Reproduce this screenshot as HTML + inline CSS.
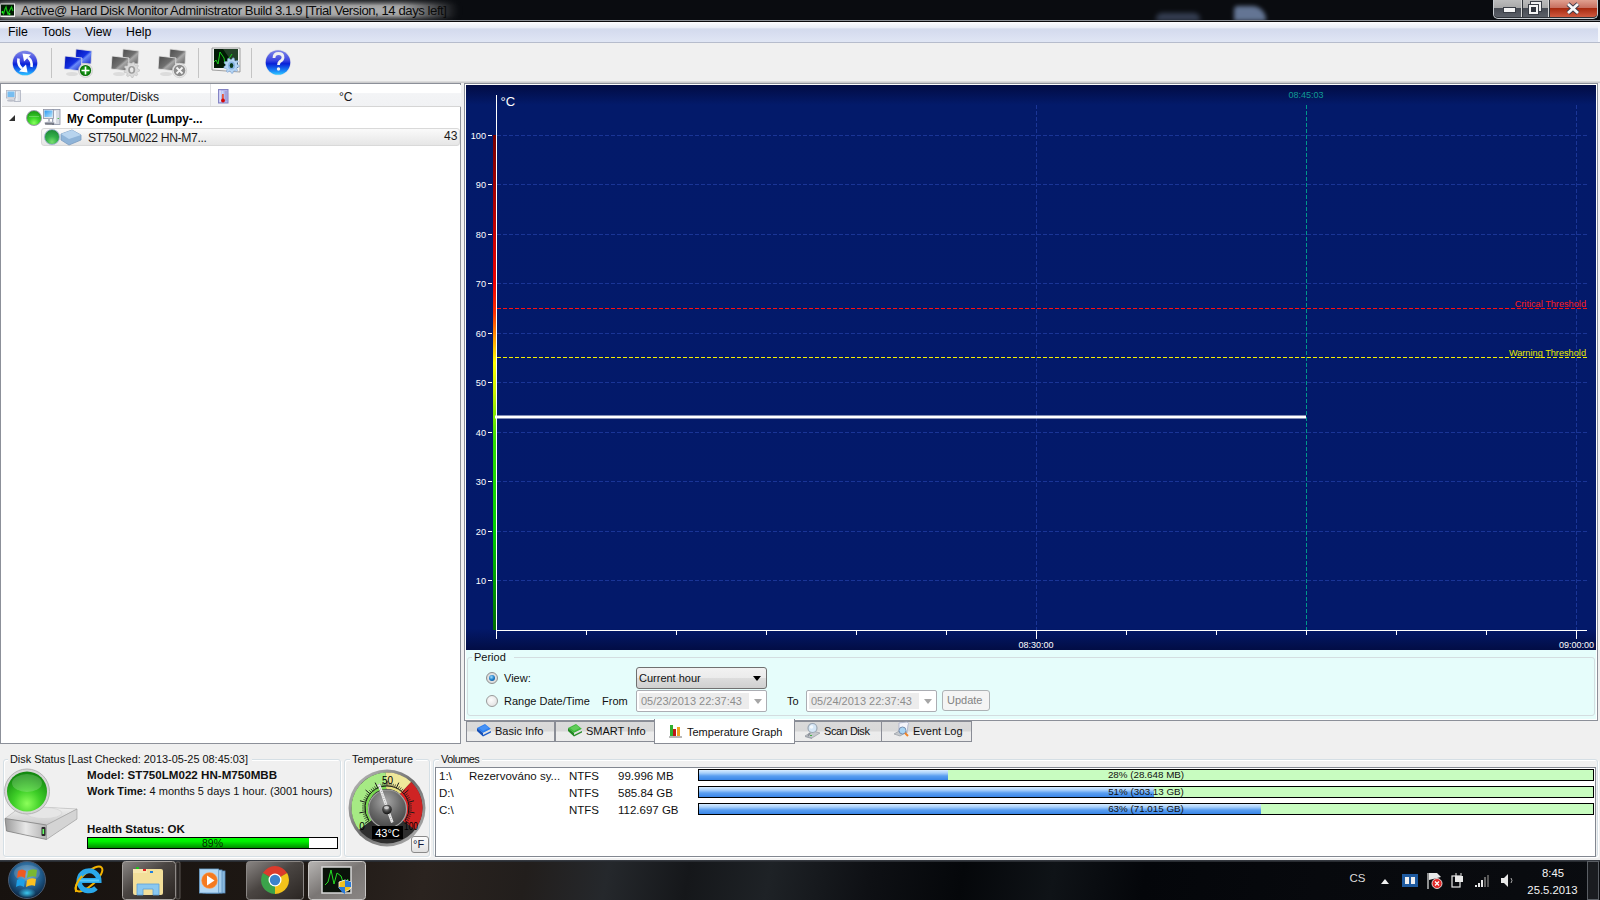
<!DOCTYPE html>
<html><head><meta charset="utf-8">
<style>
*{margin:0;padding:0;box-sizing:border-box}
html,body{width:1600px;height:900px;overflow:hidden;background:#f0f0f0;font-family:"Liberation Sans",sans-serif;font-size:11px;color:#000}
.a{position:absolute}
.t{position:absolute;white-space:nowrap;line-height:1}
#title{left:0;top:0;width:1600px;height:22px;background:#0a0c10}
#menu{left:0;top:22px;width:1600px;height:21px;background:linear-gradient(#fdfdff 0,#f2f4fa 15%,#e8ecf6 30%,#d3daed 34%,#d8def0 60%,#e0e6f4 100%);border-bottom:1px solid #b6bccc;box-shadow:inset -2px 0 0 #f4f6fb}
#tool{left:0;top:43px;width:1600px;height:40px;background:#f0f0f0}
#left{left:0;top:83px;width:461px;height:661px;background:#fff;border:1px solid #8c9099}
#graph{left:0;top:0;width:0;height:0}
#period{left:466px;top:650px;width:1130px;height:69px;background:#e6fdfb}
#bottom{left:0;top:744px;width:1600px;height:113px;background:#f0f0f0}
#taskbar{left:0;top:860px;width:1600px;height:40px;background:#101216}
</style></head><body>
<div class="a" id="title">
<div class="a" style="left:-10px;top:1px;width:468px;height:19px;border-radius:10px;background:linear-gradient(90deg,rgba(185,185,185,.0) 0,rgba(185,185,185,.95) 3%,rgba(180,180,180,.95) 88%,rgba(180,180,180,0) 100%);filter:blur(3.5px)"></div>
<div class="a" style="left:0;top:0;width:1600px;height:22px;background:linear-gradient(rgba(10,12,16,.55) 0,rgba(10,12,16,0) 25%,rgba(10,12,16,0) 70%,rgba(10,12,16,.6) 100%)"></div>
<div class="a" style="left:1156px;top:13px;width:44px;height:8px;background:#5a6a8c;filter:blur(2.5px);opacity:.55;border-radius:6px 6px 0 0"></div>
<div class="a" style="left:1234px;top:6px;width:32px;height:15px;background:#8aa2cc;filter:blur(2px);opacity:.7;border-radius:4px 14px 0 0"></div>
<svg class="a" style="left:0;top:3px" width="16" height="15"><rect x="0.5" y="0.5" width="14.5" height="13.5" fill="#f0f0f0"/><rect x="1" y="1.5" width="13" height="11" fill="#031a05"/><polyline points="2,9 3.5,11 5,6 6,4 7,8 8,11 10,7 11.5,4 13,8" fill="none" stroke="#16c016" stroke-width="1.2"/><circle cx="2.5" cy="9" r="1" fill="#2f2"/><circle cx="9.5" cy="11" r="1" fill="#2f2"/></svg>
<div class="t" style="left:21px;top:4px;font-size:13.1px;color:#0a0a0a;letter-spacing:-0.43px">Active@ Hard Disk Monitor Administrator Build 3.1.9 [Trial Version, 14 days left]</div>
<div class="a" style="left:1493px;top:0;width:105px;height:19px;border:1px solid #c8ccd0;border-top:none;border-radius:0 0 5px 5px;background:#30343a"></div>
<div class="a" style="left:1494px;top:0;width:28px;height:17px;border-radius:0 0 0 4px;border-right:1px solid #d8d8d8;background:linear-gradient(#bcbcbc 0,#a8a8a8 45%,#484c54 50%,#5c6068 100%)"></div>
<div class="a" style="left:1523px;top:0;width:26px;height:17px;border-right:1px solid #d8d8d8;background:linear-gradient(#bcbcbc 0,#a8a8a8 45%,#484c54 50%,#5c6068 100%)"></div>
<div class="a" style="left:1550px;top:0;width:47px;height:17px;border-radius:0 0 4px 0;background:linear-gradient(#e0a090 0,#c87060 45%,#a82a10 50%,#d05a40 100%)"></div>
<div class="a" style="left:1504px;top:8px;width:11px;height:4px;background:#f4f4f4;box-shadow:0 0 0 1px #3a3e46"></div>
<div class="a" style="left:1531px;top:2px;width:10px;height:9px;border:2px solid #f0f0f0;box-shadow:0 0 0 1px #3a3e46"></div>
<div class="a" style="left:1529px;top:5px;width:9px;height:9px;border:2px solid #f4f4f4;background:#30343c;box-shadow:0 0 0 1px #3a3e46"></div>
<svg class="a" style="left:1566px;top:2px" width="14" height="13"><path d="M2,2 L12,11 M12,2 L2,11" stroke="#3a3a4a" stroke-width="4.4"/><path d="M2,2 L12,11 M12,2 L2,11" stroke="#f8f8f8" stroke-width="2.8"/></svg>
<div class="a" style="left:0;top:20px;width:1600px;height:1px;background:#8a8e94"></div>
<div class="a" style="left:0;top:21px;width:1600px;height:1px;background:#08080a"></div>
</div>
<div class="a" id="menu">
<div class="t" style="left:8px;top:4px;font-size:12.3px">File</div>
<div class="t" style="left:42px;top:4px;font-size:12.3px">Tools</div>
<div class="t" style="left:85px;top:4px;font-size:12.3px">View</div>
<div class="t" style="left:126px;top:4px;font-size:12.3px">Help</div>
</div>
<div class="a" id="tool">
<svg class="a" style="left:0;top:0" width="320" height="40" viewBox="0 43 320 40">
<defs>
<linearGradient id="bl" x1="0" y1="0" x2="0" y2="1"><stop offset="0" stop-color="#8088e8"/><stop offset=".42" stop-color="#3a44e0"/><stop offset=".55" stop-color="#0820d8"/><stop offset=".85" stop-color="#1a8cf8"/><stop offset="1" stop-color="#30c8ff"/></linearGradient>
<linearGradient id="scr" x1="0" y1="0" x2="1" y2="1"><stop offset="0" stop-color="#0010b0"/><stop offset=".5" stop-color="#1430e0"/><stop offset=".6" stop-color="#6a8af8"/><stop offset="1" stop-color="#1020c0"/></linearGradient>
<linearGradient id="scrg" x1="0" y1="0" x2="1" y2="1"><stop offset="0" stop-color="#4a4a4a"/><stop offset=".5" stop-color="#707070"/><stop offset=".6" stop-color="#a8a8a8"/><stop offset="1" stop-color="#5a5a5a"/></linearGradient>
<radialGradient id="grn" cx=".5" cy=".5" r=".5"><stop offset="0" stop-color="#30c030"/><stop offset="1" stop-color="#006a00"/></radialGradient>
</defs>
<circle cx="25" cy="63" r="13" fill="#d8d8e0" opacity=".6"/>
<circle cx="25" cy="63" r="12.3" fill="url(#bl)"/>
<path d="M31.5,67 Q32.5,61 28,57.5" fill="none" stroke="#fff" stroke-width="2.6"/>
<polygon points="22.5,53.5 31,54.5 24,61.5" fill="#fff"/>
<path d="M18.5,58.5 Q17.5,65 22,68.5" fill="none" stroke="#fff" stroke-width="2.6"/>
<polygon points="27.5,72.5 19,71.5 26,64.5" fill="#fff"/>
<line x1="51.5" y1="48" x2="51.5" y2="78" stroke="#c4c4c4" stroke-width="1"/>
<line x1="198.5" y1="48" x2="198.5" y2="78" stroke="#c4c4c4" stroke-width="1"/>
<line x1="251.5" y1="48" x2="251.5" y2="78" stroke="#c4c4c4" stroke-width="1"/>
<!-- add computer -->
<polygon points="76,49 92,51 91,64 75,63" fill="url(#scr)" stroke="#e0e0e0" stroke-width="0.8"/>
<polygon points="65,56 82,58 81,71 64,69" fill="url(#scr)" stroke="#e8e8e8" stroke-width="0.8"/>
<ellipse cx="72" cy="74" rx="6" ry="2" fill="#dcdcdc"/>
<circle cx="85.5" cy="70.5" r="7" fill="#e8e8e8" stroke="#bcbcbc" stroke-width="0.6"/>
<circle cx="85.5" cy="70.5" r="5.6" fill="url(#grn)"/>
<path d="M85.5,66.5 V74.5 M81.5,70.5 H89.5" stroke="#fff" stroke-width="1.6"/>
<!-- gray computer gear -->
<polygon points="123,49 139,51 138,64 122,63" fill="url(#scrg)" stroke="#e0e0e0" stroke-width="0.8"/>
<polygon points="112,56 129,58 128,71 111,69" fill="url(#scrg)" stroke="#e8e8e8" stroke-width="0.8"/>
<ellipse cx="119" cy="74" rx="6" ry="2" fill="#dcdcdc"/>
<polygon points="139.50,69.80 139.38,71.15 137.34,71.85 136.90,72.80 137.68,74.81 136.71,75.78 134.70,75.00 133.75,75.44 133.05,77.48 131.70,77.60 130.66,75.71 129.65,75.44 127.80,76.55 126.69,75.78 127.10,73.66 126.50,72.80 124.37,72.47 124.02,71.15 125.70,69.80 125.79,68.76 124.37,67.13 124.95,65.90 127.10,65.94 127.84,65.20 127.80,63.05 129.03,62.47 130.66,63.89 131.70,63.80 133.05,62.12 134.37,62.47 134.70,64.60 135.56,65.20 137.68,64.79 138.45,65.90 137.34,67.75 137.61,68.76" fill="#dadada" stroke="#b8b8b8" stroke-width="0.6"/><ellipse cx="131.7" cy="69.8" rx="3.51" ry="3.90" fill="#9c9c9c"/><ellipse cx="131.7" cy="69.8" rx="1.82" ry="2.60" fill="#e8e8e8"/>
<!-- gray computer x -->
<polygon points="170,49 186,51 185,64 169,63" fill="url(#scrg)" stroke="#e0e0e0" stroke-width="0.8"/>
<polygon points="159,56 176,58 175,71 158,69" fill="url(#scrg)" stroke="#e8e8e8" stroke-width="0.8"/>
<ellipse cx="166" cy="74" rx="6" ry="2" fill="#dcdcdc"/>
<circle cx="179.5" cy="70.5" r="7.2" fill="#e6e6e6" stroke="#c8c8c8" stroke-width="0.6"/>
<circle cx="179.5" cy="70.5" r="5.8" fill="#8c8c8c"/>
<path d="M176.5,67.5 L182.5,73.5 M182.5,67.5 L176.5,73.5" stroke="#f4f4f4" stroke-width="1.8"/>
<!-- monitor gear -->
<polygon points="212,48 240,48 240,72 212,70" fill="#f0f0f0" stroke="#8a8a8a" stroke-width="0.8"/>
<rect x="214" y="49" width="24" height="19" fill="#021a06"/>
<polygon points="223,49 238,49 238,60 232,62" fill="#2a4a30" opacity=".8"/>
<polyline points="214,62 216,60 218,64 220,52 222,55 224,58 225,64 228,60 232,54" fill="none" stroke="#1ad01a" stroke-width="1"/>
<polygon points="239.30,65.50 239.18,66.85 237.14,67.55 236.70,68.50 237.48,70.51 236.51,71.48 234.50,70.70 233.55,71.14 232.85,73.18 231.50,73.30 230.46,71.41 229.45,71.14 227.60,72.25 226.49,71.48 226.90,69.36 226.30,68.50 224.17,68.17 223.82,66.85 225.50,65.50 225.59,64.46 224.17,62.83 224.75,61.60 226.90,61.64 227.64,60.90 227.60,58.75 228.83,58.17 230.46,59.59 231.50,59.50 232.85,57.82 234.17,58.17 234.50,60.30 235.36,60.90 237.48,60.49 238.25,61.60 237.14,63.45 237.41,64.46" fill="#b4d4f4" stroke="#7aa0d0" stroke-width="0.6"/><ellipse cx="231.5" cy="65.5" rx="3.51" ry="3.90" fill="#88b4e4"/><ellipse cx="231.5" cy="65.5" rx="1.82" ry="2.60" fill="#0a3a20"/>
<!-- help -->
<circle cx="278" cy="62.5" r="13" fill="#d8d8e0" opacity=".6"/>
<circle cx="278" cy="62.5" r="12.3" fill="url(#bl)"/>
<path d="M274,58 Q274,53.5 278.5,53.5 Q283,53.5 283,57.5 Q283,60 280,61.5 Q278.5,62.5 278.5,65" fill="none" stroke="#f0f0f0" stroke-width="2.8"/>
<circle cx="278.5" cy="69" r="1.7" fill="#f0f0f0"/>
</svg>
</div>
<div class="a" style="left:0;top:81px;width:1600px;height:2px;background:linear-gradient(#e4e4e4,#c4c4c6)"></div>
<div class="a" id="left">
<div class="a" style="left:1px;top:1px;width:459px;height:22px;background:linear-gradient(#fff 0,#fff 36%,#f3f4f6 41%,#f1f2f4 100%);border-bottom:1px solid #d5d5d5"></div>
<div class="a" style="left:209px;top:0px;width:1px;height:22px;background:#dfe0e3"></div>
<svg class="a" style="left:4px;top:5px" width="18" height="14" viewBox="4 89 18 14" opacity=".8">
<rect x="13.5" y="90.5" width="6" height="11" fill="#d8dce4" stroke="#9ca2b2" stroke-width="0.8"/><rect x="15" y="92" width="1.5" height="9" fill="#f0f2f6"/>
<rect x="5.5" y="90.5" width="9" height="7.5" fill="#e4e6ec" stroke="#9ca2b2" stroke-width="0.8"/><rect x="6.5" y="91.5" width="7" height="5.5" fill="#58b0f0"/>
<ellipse cx="10" cy="100.5" rx="4" ry="1.2" fill="#b0b4c0"/></svg>
<div class="t" style="left:72px;top:7px;font-size:12.1px;color:#1a1a1a">Computer/Disks</div>
<svg class="a" style="left:216px;top:5px" width="12" height="15"><rect x="1.5" y="0.5" width="9.5" height="13.5" fill="#b4b4ea" stroke="#8484c4"/><rect x="2.5" y="1.5" width="1.2" height="11.5" fill="#e8e8fc"/><rect x="4.5" y="2" width="2" height="4" fill="#c8d8f8"/><rect x="8" y="2" width="2" height="10" fill="#a4a4dc"/><rect x="5" y="5" width="1.8" height="6" fill="#e8583a"/><circle cx="6" cy="11.5" r="1.9" fill="#d40808"/></svg>
<div class="t" style="left:338px;top:7px;font-size:12.1px;color:#1a1a1a">°C</div>
<svg class="a" style="left:7px;top:31px" width="8" height="8" viewBox="0 1 8 8"><polygon points="7,1 7,7 1,7" fill="#303030"/></svg>
<div class="a" style="left:25px;top:26px;width:16px;height:16px;border-radius:50%;background:radial-gradient(circle at 50% 85%,#8aff60 0,#3fd82c 35%,#1e9e18 80%);border:1px solid #9a9aa8"></div>
<div class="a" style="left:28px;top:32px;width:10px;height:1px;background:rgba(255,255,255,.25)"></div>
<svg class="a" style="left:41px;top:24px" width="21" height="20" viewBox="42 108 21 20"><defs><linearGradient id="tscr" x1="0" y1="0" x2="1" y2="1"><stop offset="0" stop-color="#2a98f0"/><stop offset="1" stop-color="#b8e4fc"/></linearGradient></defs>
<rect x="52.5" y="109.5" width="7.5" height="15" fill="#d8dce4" stroke="#8c92a6" stroke-width="0.8"/><rect x="54" y="111" width="2" height="12" fill="#f4f6fa"/><rect x="57.5" y="118" width="1.5" height="1" fill="#50c050"/>
<rect x="43.5" y="109.5" width="10" height="9" fill="#e4e6ec" stroke="#8c92a6" stroke-width="0.8"/><rect x="44.5" y="110.5" width="8" height="6.5" fill="url(#tscr)"/>
<rect x="48" y="118.5" width="2" height="3" fill="#b8bcc8"/><ellipse cx="49.5" cy="123" rx="5" ry="1.5" fill="#a8acb8"/><path d="M45,124 L54,124" stroke="#30343c" stroke-width="0.8"/></svg>
<div class="t" style="left:66px;top:30px;font-size:11.85px;font-weight:bold;color:#000">My Computer (Lumpy-...</div>
<div class="a" style="left:40px;top:44px;width:419px;height:18px;border:1px solid #d9d9d9;border-radius:3px;background:linear-gradient(#fafafa 0,#f0f0f0 50%,#e6e6e6 100%)"></div>
<div class="a" style="left:43px;top:45px;width:16px;height:16px;border-radius:50%;background:radial-gradient(circle at 50% 85%,#7ae070 0,#34b04a 40%,#1e8a38 85%);border:1px solid #9ab0c8"></div>
<svg class="a" style="left:58px;top:45px" width="24" height="17"><polygon points="2,5 13,1 22,6 22,11 10,16 2,11" fill="#8fb4d8" stroke="#7a9cc0" stroke-width="0.8"/><polygon points="2,5 13,1 22,6 10,10" fill="#b8d4ee"/></svg>
<div class="t" style="left:87px;top:48px;font-size:12.2px;letter-spacing:-0.35px;color:#1a1a1a">ST750LM022 HN-M7...</div>
<div class="t" style="left:443px;top:46px;font-size:12.1px;color:#1a1a1a">43</div>
</div>
<div class="a" style="left:464px;top:83px;width:1134px;height:638px;border:1px solid #8c9099;background:#fff"></div>
<div class="a" id="graph"><svg class="a" style="left:466px;top:85px" width="1130" height="565" viewBox="466 85 1130 565">
<defs>
<linearGradient id="gbg" x1="0" y1="0" x2="0" y2="1"><stop offset="0" stop-color="#020c44"/><stop offset="0.035" stop-color="#031a6a"/><stop offset="0.962" stop-color="#03196a"/><stop offset="1" stop-color="#020d45"/></linearGradient>
<linearGradient id="cbar" x1="0" y1="135" x2="0" y2="630" gradientUnits="userSpaceOnUse">
<stop offset="0" stop-color="#780000"/><stop offset="0.3" stop-color="#f00000"/><stop offset="0.36" stop-color="#ff3000"/><stop offset="0.41" stop-color="#ff9a00"/><stop offset="0.46" stop-color="#ffff00"/><stop offset="0.52" stop-color="#c8f000"/><stop offset="0.62" stop-color="#30e000"/><stop offset="0.8" stop-color="#00d000"/><stop offset="1" stop-color="#006e00"/></linearGradient>
</defs>
<rect x="466" y="85" width="1130" height="565" fill="url(#gbg)"/>
<line x1="497" y1="135.5" x2="1587" y2="135.5" stroke="#1a3596" stroke-width="1" stroke-dasharray="4 2"/>
<line x1="488" y1="135.5" x2="492" y2="135.5" stroke="#fff" stroke-width="1"/>
<text x="486" y="139" fill="#fff" font-size="9.2" text-anchor="end" font-family="Liberation Sans">100</text>
<line x1="497" y1="184.5" x2="1587" y2="184.5" stroke="#1a3596" stroke-width="1" stroke-dasharray="4 2"/>
<line x1="488" y1="184.5" x2="492" y2="184.5" stroke="#fff" stroke-width="1"/>
<text x="486" y="188" fill="#fff" font-size="9.2" text-anchor="end" font-family="Liberation Sans">90</text>
<line x1="497" y1="234.5" x2="1587" y2="234.5" stroke="#1a3596" stroke-width="1" stroke-dasharray="4 2"/>
<line x1="488" y1="234.5" x2="492" y2="234.5" stroke="#fff" stroke-width="1"/>
<text x="486" y="238" fill="#fff" font-size="9.2" text-anchor="end" font-family="Liberation Sans">80</text>
<line x1="497" y1="283.5" x2="1587" y2="283.5" stroke="#1a3596" stroke-width="1" stroke-dasharray="4 2"/>
<line x1="488" y1="283.5" x2="492" y2="283.5" stroke="#fff" stroke-width="1"/>
<text x="486" y="287" fill="#fff" font-size="9.2" text-anchor="end" font-family="Liberation Sans">70</text>
<line x1="497" y1="333.5" x2="1587" y2="333.5" stroke="#1a3596" stroke-width="1" stroke-dasharray="4 2"/>
<line x1="488" y1="333.5" x2="492" y2="333.5" stroke="#fff" stroke-width="1"/>
<text x="486" y="337" fill="#fff" font-size="9.2" text-anchor="end" font-family="Liberation Sans">60</text>
<line x1="497" y1="382.5" x2="1587" y2="382.5" stroke="#1a3596" stroke-width="1" stroke-dasharray="4 2"/>
<line x1="488" y1="382.5" x2="492" y2="382.5" stroke="#fff" stroke-width="1"/>
<text x="486" y="386" fill="#fff" font-size="9.2" text-anchor="end" font-family="Liberation Sans">50</text>
<line x1="497" y1="432.5" x2="1587" y2="432.5" stroke="#1a3596" stroke-width="1" stroke-dasharray="4 2"/>
<line x1="488" y1="432.5" x2="492" y2="432.5" stroke="#fff" stroke-width="1"/>
<text x="486" y="436" fill="#fff" font-size="9.2" text-anchor="end" font-family="Liberation Sans">40</text>
<line x1="497" y1="481.5" x2="1587" y2="481.5" stroke="#1a3596" stroke-width="1" stroke-dasharray="4 2"/>
<line x1="488" y1="481.5" x2="492" y2="481.5" stroke="#fff" stroke-width="1"/>
<text x="486" y="485" fill="#fff" font-size="9.2" text-anchor="end" font-family="Liberation Sans">30</text>
<line x1="497" y1="531.5" x2="1587" y2="531.5" stroke="#1a3596" stroke-width="1" stroke-dasharray="4 2"/>
<line x1="488" y1="531.5" x2="492" y2="531.5" stroke="#fff" stroke-width="1"/>
<text x="486" y="535" fill="#fff" font-size="9.2" text-anchor="end" font-family="Liberation Sans">20</text>
<line x1="497" y1="580.5" x2="1587" y2="580.5" stroke="#1a3596" stroke-width="1" stroke-dasharray="4 2"/>
<line x1="488" y1="580.5" x2="492" y2="580.5" stroke="#fff" stroke-width="1"/>
<text x="486" y="584" fill="#fff" font-size="9.2" text-anchor="end" font-family="Liberation Sans">10</text>
<line x1="1036.5" y1="105" x2="1036.5" y2="630" stroke="#1a3596" stroke-width="1" stroke-dasharray="4 2"/>
<line x1="1576.5" y1="105" x2="1576.5" y2="630" stroke="#1a3596" stroke-width="1" stroke-dasharray="4 2"/>
<line x1="1306.5" y1="105" x2="1306.5" y2="630" stroke="#00968c" stroke-width="1" stroke-dasharray="4 2"/>
<line x1="497" y1="308.5" x2="1587" y2="308.5" stroke="#ff1010" stroke-width="1" stroke-dasharray="4 2"/>
<line x1="497" y1="357.5" x2="1587" y2="357.5" stroke="#f4f000" stroke-width="1" stroke-dasharray="4 2"/>
<text x="1586" y="307" fill="#ff1a1a" font-size="9.2" text-anchor="end" font-family="Liberation Sans">Critical Threshold</text>
<text x="1586" y="356" fill="#e8e800" font-size="9.2" text-anchor="end" font-family="Liberation Sans">Warning Threshold</text>
<rect x="493" y="135" width="3" height="495" fill="url(#cbar)"/>
<line x1="496.5" y1="95" x2="496.5" y2="638" stroke="#fff" stroke-width="1"/>
<line x1="496" y1="630.5" x2="1587" y2="630.5" stroke="#fff" stroke-width="1"/>
<line x1="496.5" y1="631" x2="496.5" y2="639" stroke="#fff" stroke-width="1"/>
<line x1="586.5" y1="631" x2="586.5" y2="635" stroke="#fff" stroke-width="1"/>
<line x1="676.5" y1="631" x2="676.5" y2="635" stroke="#fff" stroke-width="1"/>
<line x1="766.5" y1="631" x2="766.5" y2="635" stroke="#fff" stroke-width="1"/>
<line x1="856.5" y1="631" x2="856.5" y2="635" stroke="#fff" stroke-width="1"/>
<line x1="946.5" y1="631" x2="946.5" y2="635" stroke="#fff" stroke-width="1"/>
<line x1="1036.5" y1="631" x2="1036.5" y2="639" stroke="#fff" stroke-width="1"/>
<line x1="1126.5" y1="631" x2="1126.5" y2="635" stroke="#fff" stroke-width="1"/>
<line x1="1216.5" y1="631" x2="1216.5" y2="635" stroke="#fff" stroke-width="1"/>
<line x1="1306.5" y1="631" x2="1306.5" y2="635" stroke="#fff" stroke-width="1"/>
<line x1="1396.5" y1="631" x2="1396.5" y2="635" stroke="#fff" stroke-width="1"/>
<line x1="1486.5" y1="631" x2="1486.5" y2="635" stroke="#fff" stroke-width="1"/>
<line x1="1576.5" y1="631" x2="1576.5" y2="639" stroke="#fff" stroke-width="1"/>
<text x="500.5" y="105.5" fill="#fff" font-size="13" font-family="Liberation Sans">°C</text>
<text x="1306" y="98" fill="#119a94" font-size="9" text-anchor="middle" font-family="Liberation Sans">08:45:03</text>
<text x="1036" y="648" fill="#fff" font-size="9" text-anchor="middle" font-family="Liberation Sans">08:30:00</text>
<text x="1594" y="648" fill="#fff" font-size="9" text-anchor="end" font-family="Liberation Sans">09:00:00</text>
<rect x="495" y="415.5" width="811" height="3" fill="#fff"/>
</svg></div>
<div class="a" id="period">
<div class="a" style="left:1px;top:7px;width:1128px;height:59px;border:1px solid #d4dde0;border-radius:3px"></div>
<div class="a" style="left:6px;top:2px;width:42px;height:12px;background:#e6fdfb"></div>
<div class="t" style="left:8px;top:2px;font-size:11px;color:#111">Period</div>
<div class="a" style="left:20px;top:22px;width:12px;height:12px;border-radius:50%;border:1px solid #8e8f8f;background:radial-gradient(#f4f4f4,#d0d0d0)"></div>
<div class="a" style="left:23px;top:25px;width:6px;height:6px;border-radius:50%;background:radial-gradient(circle at 40% 35%,#9fdcff 0,#1e7fc8 50%,#0a3f80 100%)"></div>
<div class="t" style="left:38px;top:23px;font-size:11px;color:#111">View:</div>
<div class="a" style="left:20px;top:45px;width:12px;height:12px;border-radius:50%;border:1px solid #9a9a9a;background:radial-gradient(circle at 40% 40%,#fdfdfd,#dcdcdc)"></div>
<div class="t" style="left:38px;top:46px;font-size:11px;color:#111">Range Date/Time</div>
<div class="t" style="left:136px;top:46px;font-size:11px;color:#111">From</div>
<div class="a" style="left:170px;top:17px;width:131px;height:22px;border:1px solid #707070;border-radius:3px;background:linear-gradient(#f2f2f2 0,#ebebeb 50%,#dddddd 51%,#cfcfcf 100%)"></div>
<div class="t" style="left:173px;top:23px;font-size:11px;color:#111">Current hour</div>
<svg class="a" style="left:287px;top:26px" width="9" height="6"><polygon points="0,0 8,0 4,5" fill="#000"/></svg>
<div class="a" style="left:170px;top:40px;width:131px;height:22px;border:1px solid #abadb3;border-radius:2px;background:#fff"></div>
<div class="a" style="left:173px;top:43px;width:110px;height:16px;background:#ececec"></div>
<div class="t" style="left:175px;top:46px;font-size:11px;color:#8d8d8d">05/23/2013 22:37:43</div>
<svg class="a" style="left:288px;top:49px" width="9" height="6"><polygon points="0,0 8,0 4,5" fill="#a6a6a6"/></svg>
<div class="t" style="left:321px;top:46px;font-size:11px;color:#111">To</div>
<div class="a" style="left:340px;top:40px;width:131px;height:22px;border:1px solid #abadb3;border-radius:2px;background:#fff"></div>
<div class="a" style="left:343px;top:43px;width:110px;height:16px;background:#ececec"></div>
<div class="t" style="left:345px;top:46px;font-size:11px;color:#8d8d8d">05/24/2013 22:37:43</div>
<svg class="a" style="left:458px;top:49px" width="9" height="6"><polygon points="0,0 8,0 4,5" fill="#a6a6a6"/></svg>
<div class="a" style="left:476px;top:40px;width:48px;height:21px;border:1px solid #adb2b5;border-radius:3px;background:#f4f4f4"></div>
<div class="t" style="left:481px;top:45px;font-size:11px;color:#838383">Update</div>
</div>
<div class="a" style="left:464px;top:720px;width:1134px;height:1px;background:#8c9099"></div>

<div class="a" style="left:466px;top:721px;width:89px;height:21px;border:1px solid #898c95;border-top:1px solid #898c95;background:linear-gradient(#dadada 0,#d8d8d8 45%,#ececec 55%,#ebebeb 100%)"></div>
<div class="a" style="left:555px;top:721px;width:100px;height:21px;border:1px solid #898c95;background:linear-gradient(#dadada 0,#d8d8d8 45%,#ececec 55%,#ebebeb 100%)"></div>
<div class="a" style="left:654px;top:719px;width:141px;height:25px;border:1px solid #898c95;border-top:none;background:#fff"></div>
<div class="a" style="left:794px;top:721px;width:88px;height:21px;border:1px solid #898c95;background:linear-gradient(#dadada 0,#d8d8d8 45%,#ececec 55%,#ebebeb 100%)"></div>
<div class="a" style="left:881px;top:721px;width:91px;height:21px;border:1px solid #898c95;background:linear-gradient(#dadada 0,#d8d8d8 45%,#ececec 55%,#ebebeb 100%)"></div>
<svg class="a" style="left:476px;top:723px" width="17" height="15"><polygon points="1,5 9,1 15,6 7,10" fill="#2a7ef0"/><polygon points="3,5 9,2 13,5 7,8" fill="#5aa0f8" opacity=".6"/><polygon points="7,10 15,6 15,9 7,13" fill="#e0e0e0"/><polygon points="7,12 15,8 15,9.5 7,13.5" fill="#1a5ac8"/><polygon points="1,5 7,10 7,13.5 1,8" fill="#1650b8"/></svg>
<div class="t" style="left:495px;top:726px;font-size:11px;color:#111">Basic Info</div>
<svg class="a" style="left:567px;top:723px" width="17" height="15"><polygon points="1,5 9,1 15,6 7,10" fill="#3cb83a"/><polygon points="3,5 9,2 13,5 7,8" fill="#7ad870" opacity=".6"/><polygon points="7,10 15,6 15,9 7,13" fill="#e0e0e0"/><polygon points="7,12 15,8 15,9.5 7,13.5" fill="#2a8a2a"/><polygon points="1,5 7,10 7,13.5 1,8" fill="#228a22"/></svg>
<div class="t" style="left:586px;top:726px;font-size:11px;color:#111">SMART Info</div>
<svg class="a" style="left:668px;top:724px" width="16" height="16"><rect x="2" y="1" width="3" height="11" fill="#30b030"/><rect x="5" y="5" width="3" height="8" fill="#c01818"/><rect x="9" y="3" width="3" height="10" fill="#f0a020"/><rect x="1" y="12" width="13" height="2" fill="#b8b8b8"/></svg>
<div class="t" style="left:687px;top:727px;font-size:11px;color:#111">Temperature Graph</div>
<svg class="a" style="left:804px;top:722px" width="18" height="18"><polygon points="1,14 9,9 16,11 8,16" fill="#c4c8cc" stroke="#8a9098" stroke-width="0.6"/><polygon points="1,14 8,16 8,17 1,15" fill="#9aa0a8"/><rect x="6" y="13" width="2" height="1" fill="#40b040"/><line x1="6" y1="11" x2="4" y2="14" stroke="#8a9098" stroke-width="1.5"/><circle cx="8.5" cy="6" r="4.5" fill="#d4e6f6" stroke="#9aa6b2" stroke-width="1.2"/><circle cx="7.5" cy="5" r="1.8" fill="#fff" opacity=".7"/></svg>
<div class="t" style="left:824px;top:726px;font-size:11px;letter-spacing:-0.45px;color:#111">Scan Disk</div>
<svg class="a" style="left:893px;top:721px" width="18" height="18"><path d="M6,2 L14,1 Q17,2 15,4 L14,12 L6,12 Z" fill="#f4f4fa" stroke="#a8aec8" stroke-width="0.8"/><polygon points="1,13 8,9 14,11 7,15" fill="#c4c8cc" stroke="#8a9098" stroke-width="0.6"/><circle cx="9.5" cy="9.5" r="3.5" fill="#a8d4f4" stroke="#7890b0" stroke-width="1"/><line x1="12" y1="12" x2="15" y2="15" stroke="#f08428" stroke-width="2"/></svg>
<div class="t" style="left:913px;top:726px;font-size:11px;color:#111">Event Log</div>

<div class="a" id="bottom">
<div class="a" style="left:3px;top:15px;width:338px;height:98px;border:1px solid #d5dfe5;border-radius:3px;box-shadow:inset 1px 1px 0 #fff,1px 1px 0 #fff"></div>
<div class="a" style="left:8px;top:9px;width:244px;height:12px;background:#f0f0f0"></div>
<div class="t" style="left:10px;top:10px;font-size:10.9px;color:#111">Disk Status [Last Checked: 2013-05-25 08:45:03]</div>
<div class="a" style="left:344px;top:15px;width:86px;height:98px;border:1px solid #d5dfe5;border-radius:3px;box-shadow:inset 1px 1px 0 #fff,1px 1px 0 #fff"></div>
<div class="a" style="left:350px;top:9px;width:66px;height:12px;background:#f0f0f0"></div>
<div class="t" style="left:352px;top:10px;font-size:10.9px;color:#111">Temperature</div>
<div class="a" style="left:433px;top:15px;width:1165px;height:98px;border:1px solid #d5dfe5;border-radius:3px;box-shadow:inset 1px 1px 0 #fff,1px 1px 0 #fff"></div>
<div class="a" style="left:439px;top:9px;width:43px;height:12px;background:#f0f0f0"></div>
<div class="t" style="left:441px;top:10px;font-size:10.9px;color:#111;letter-spacing:-0.5px">Volumes</div>
</div>
<!-- disk icon -->
<svg class="a" style="left:0;top:765px" width="85" height="85" viewBox="0 765 85 85">
<defs>
<linearGradient id="dk1" x1="0" y1="0" x2="0" y2="1"><stop offset="0" stop-color="#f4f4f4"/><stop offset="1" stop-color="#c8c8c8"/></linearGradient>
<linearGradient id="dk2" x1="0" y1="0" x2="1" y2="0"><stop offset="0" stop-color="#9a9a9a"/><stop offset=".5" stop-color="#e8e8e8"/><stop offset="1" stop-color="#b0b0b0"/></linearGradient>
<radialGradient id="gb" cx=".5" cy=".8" r=".75"><stop offset="0" stop-color="#8cff5a"/><stop offset=".45" stop-color="#3fcf28"/><stop offset="1" stop-color="#148a10"/></radialGradient>
</defs>
<path d="M5,818.5 L22,806 L77,809 L77,819 L46.5,839.5 L6.5,831 Z" fill="#bdbdbd"/>
<path d="M5,818.5 L22,806 L77,809 L46.5,825 Z" fill="url(#dk1)" stroke="#b8b8b8" stroke-width="0.6"/>
<ellipse cx="44" cy="813" rx="18" ry="5.5" fill="#e6e6e6" stroke="#d0d0d0" stroke-width="0.6"/>
<path d="M5,818.5 L46.5,825 L46.5,839.5 L6.5,831 Z" fill="url(#dk2)" stroke="#7a7a7a" stroke-width="0.7"/>
<path d="M46.5,825 L77,809 L77,819 L46.5,839.5 Z" fill="#d4d4d4" stroke="#9a9a9a" stroke-width="0.6"/>
<rect x="41.5" y="827" width="4" height="9" rx="1" fill="#2a2a2a"/><rect x="42.5" y="829" width="1.6" height="5" fill="#6f6"/>
<circle cx="27" cy="791.5" r="22.5" fill="#d6d6d6" stroke="#b4b4b4" stroke-width="1"/>
<circle cx="27" cy="791.5" r="20" fill="url(#gb)"/>
<ellipse cx="27" cy="783" rx="15" ry="9" fill="#fff" opacity=".18"/>
</svg>
<div class="t" style="left:87px;top:769px;font-size:11.6px;font-weight:bold;color:#111">Model: ST750LM022 HN-M750MBB</div>
<div class="t" style="left:87px;top:786px;font-size:11px;color:#111"><b>Work Time:</b> 4 months 5 days 1 hour. (3001 hours)</div>
<div class="t" style="left:87px;top:824px;font-size:11.5px;font-weight:bold;color:#111">Health Status: OK</div>
<div class="a" style="left:87px;top:837px;width:251px;height:12px;border:1px solid #000;background:#fff"></div>
<div class="a" style="left:88px;top:838px;width:221px;height:10px;background:linear-gradient(#00ff00 0,#00ee00 35%,#008c00 100%)"></div>
<div class="t" style="left:88px;top:838px;width:249px;text-align:center;font-size:10.5px;color:#062806">89%</div>
<svg class="a" style="left:340px;top:765px" width="95" height="95" viewBox="340 765 95 95">
<defs><linearGradient id="rim" x1="0" y1="0" x2="1" y2="1"><stop offset="0" stop-color="#c4c4c4"/><stop offset=".5" stop-color="#6e6e6e"/><stop offset="1" stop-color="#b8b8b8"/></linearGradient>
<radialGradient id="ball" cx=".45" cy=".35" r=".6"><stop offset="0" stop-color="#c8c8c8"/><stop offset=".5" stop-color="#505050"/><stop offset="1" stop-color="#1a1a1a"/></radialGradient>
<radialGradient id="hub" cx=".45" cy=".3" r=".8"><stop offset="0" stop-color="#a8a8a8"/><stop offset=".5" stop-color="#6a6a6a"/><stop offset="1" stop-color="#3a3a3a"/></radialGradient></defs>
<circle cx="387" cy="808" r="38.5" fill="url(#rim)"/>
<circle cx="387" cy="808" r="35.5" fill="#2e2e2e"/>
<path d="M359.03,829.86 A35.5,35.5 0 0 1 385.76,772.52 L386.30,788.01 A20,20 0 0 0 371.24,820.31 Z" fill="#a6ea84"/>
<path d="M385.76,772.52 A35.5,35.5 0 0 1 411.21,782.04 L400.64,793.37 A20,20 0 0 0 386.30,788.01 Z" fill="#efe79a"/>
<path d="M411.21,782.04 A35.5,35.5 0 0 1 414.97,829.86 L402.76,820.31 A20,20 0 0 0 400.64,793.37 Z" fill="#cf2323"/>
<path d="M368.88,822.16 A23,23 0 0 1 386.20,785.01 L386.34,789.01 A19,19 0 0 0 372.03,819.70 Z" fill="#78d850"/>
<path d="M386.20,785.01 A23,23 0 0 1 402.69,791.18 L399.96,794.10 A19,19 0 0 0 386.34,789.01 Z" fill="#e8df80"/>
<path d="M402.69,791.18 A23,23 0 0 1 405.12,822.16 L401.97,819.70 A19,19 0 0 0 399.96,794.10 Z" fill="#e02020"/>
<circle cx="387.5" cy="809" r="19" fill="url(#hub)" stroke="#a4a4a4" stroke-width="1.2"/>
<line x1="368.98" y1="820.62" x2="364.88" y2="823.49" stroke="#1a1a1a" stroke-width="1"/>
<line x1="367.95" y1="819.00" x2="365.35" y2="820.50" stroke="#1a1a1a" stroke-width="0.7"/>
<line x1="367.06" y1="817.30" x2="364.34" y2="818.57" stroke="#1a1a1a" stroke-width="0.7"/>
<line x1="366.33" y1="815.52" x2="363.51" y2="816.55" stroke="#1a1a1a" stroke-width="0.7"/>
<line x1="365.75" y1="813.69" x2="362.85" y2="814.47" stroke="#1a1a1a" stroke-width="0.7"/>
<line x1="365.33" y1="811.82" x2="359.43" y2="812.86" stroke="#1a1a1a" stroke-width="1"/>
<line x1="365.08" y1="809.92" x2="362.10" y2="810.18" stroke="#1a1a1a" stroke-width="0.7"/>
<line x1="365.00" y1="808.00" x2="362.00" y2="808.00" stroke="#1a1a1a" stroke-width="0.7"/>
<line x1="365.08" y1="806.08" x2="362.10" y2="805.82" stroke="#1a1a1a" stroke-width="0.7"/>
<line x1="365.33" y1="804.18" x2="362.38" y2="803.66" stroke="#1a1a1a" stroke-width="0.7"/>
<line x1="365.75" y1="802.31" x2="359.95" y2="800.75" stroke="#1a1a1a" stroke-width="1"/>
<line x1="366.33" y1="800.48" x2="363.51" y2="799.45" stroke="#1a1a1a" stroke-width="0.7"/>
<line x1="367.06" y1="798.70" x2="364.34" y2="797.43" stroke="#1a1a1a" stroke-width="0.7"/>
<line x1="367.95" y1="797.00" x2="365.35" y2="795.50" stroke="#1a1a1a" stroke-width="0.7"/>
<line x1="368.98" y1="795.38" x2="366.52" y2="793.66" stroke="#1a1a1a" stroke-width="0.7"/>
<line x1="370.15" y1="793.86" x2="365.55" y2="790.00" stroke="#1a1a1a" stroke-width="1"/>
<line x1="371.44" y1="792.44" x2="369.32" y2="790.32" stroke="#1a1a1a" stroke-width="0.7"/>
<line x1="372.86" y1="791.15" x2="370.93" y2="788.85" stroke="#1a1a1a" stroke-width="0.7"/>
<line x1="374.38" y1="789.98" x2="372.66" y2="787.52" stroke="#1a1a1a" stroke-width="0.7"/>
<line x1="376.00" y1="788.95" x2="374.50" y2="786.35" stroke="#1a1a1a" stroke-width="0.7"/>
<line x1="377.70" y1="788.06" x2="375.17" y2="782.62" stroke="#1a1a1a" stroke-width="1"/>
<line x1="379.48" y1="787.33" x2="378.45" y2="784.51" stroke="#1a1a1a" stroke-width="0.7"/>
<line x1="381.31" y1="786.75" x2="380.53" y2="783.85" stroke="#1a1a1a" stroke-width="0.7"/>
<line x1="383.18" y1="786.33" x2="382.66" y2="783.38" stroke="#1a1a1a" stroke-width="0.7"/>
<line x1="385.08" y1="786.08" x2="384.82" y2="783.10" stroke="#1a1a1a" stroke-width="0.7"/>
<line x1="387.00" y1="786.00" x2="387.00" y2="781.00" stroke="#1a1a1a" stroke-width="1"/>
<line x1="388.92" y1="786.08" x2="389.18" y2="783.10" stroke="#1a1a1a" stroke-width="0.7"/>
<line x1="390.82" y1="786.33" x2="391.34" y2="783.38" stroke="#1a1a1a" stroke-width="0.7"/>
<line x1="392.69" y1="786.75" x2="393.47" y2="783.85" stroke="#1a1a1a" stroke-width="0.7"/>
<line x1="394.52" y1="787.33" x2="395.55" y2="784.51" stroke="#1a1a1a" stroke-width="0.7"/>
<line x1="396.30" y1="788.06" x2="398.83" y2="782.62" stroke="#1a1a1a" stroke-width="1"/>
<line x1="398.00" y1="788.95" x2="399.50" y2="786.35" stroke="#1a1a1a" stroke-width="0.7"/>
<line x1="399.62" y1="789.98" x2="401.34" y2="787.52" stroke="#1a1a1a" stroke-width="0.7"/>
<line x1="401.14" y1="791.15" x2="403.07" y2="788.85" stroke="#1a1a1a" stroke-width="0.7"/>
<line x1="402.56" y1="792.44" x2="404.68" y2="790.32" stroke="#1a1a1a" stroke-width="0.7"/>
<line x1="403.85" y1="793.86" x2="408.45" y2="790.00" stroke="#1a1a1a" stroke-width="1"/>
<line x1="405.02" y1="795.38" x2="407.48" y2="793.66" stroke="#1a1a1a" stroke-width="0.7"/>
<line x1="406.05" y1="797.00" x2="408.65" y2="795.50" stroke="#1a1a1a" stroke-width="0.7"/>
<line x1="406.94" y1="798.70" x2="409.66" y2="797.43" stroke="#1a1a1a" stroke-width="0.7"/>
<line x1="407.67" y1="800.48" x2="410.49" y2="799.45" stroke="#1a1a1a" stroke-width="0.7"/>
<line x1="408.25" y1="802.31" x2="414.05" y2="800.75" stroke="#1a1a1a" stroke-width="1"/>
<line x1="408.67" y1="804.18" x2="411.62" y2="803.66" stroke="#1a1a1a" stroke-width="0.7"/>
<line x1="408.92" y1="806.08" x2="411.90" y2="805.82" stroke="#1a1a1a" stroke-width="0.7"/>
<line x1="409.00" y1="808.00" x2="412.00" y2="808.00" stroke="#1a1a1a" stroke-width="0.7"/>
<line x1="408.92" y1="809.92" x2="411.90" y2="810.18" stroke="#1a1a1a" stroke-width="0.7"/>
<line x1="408.67" y1="811.82" x2="414.57" y2="812.86" stroke="#1a1a1a" stroke-width="1"/>
<line x1="408.25" y1="813.69" x2="411.15" y2="814.47" stroke="#1a1a1a" stroke-width="0.7"/>
<line x1="407.67" y1="815.52" x2="410.49" y2="816.55" stroke="#1a1a1a" stroke-width="0.7"/>
<line x1="406.94" y1="817.30" x2="409.66" y2="818.57" stroke="#1a1a1a" stroke-width="0.7"/>
<line x1="406.05" y1="819.00" x2="408.65" y2="820.50" stroke="#1a1a1a" stroke-width="0.7"/>
<line x1="405.02" y1="820.62" x2="409.12" y2="823.49" stroke="#1a1a1a" stroke-width="1"/>
<path d="M368.98,820.62 A22,22 0 1 1 405.02,820.62" fill="none" stroke="#1a1a1a" stroke-width="1"/>
<line x1="392.3" y1="822.5" x2="378.8" y2="784" stroke="#ececec" stroke-width="2.6"/>
<line x1="392.3" y1="822.5" x2="378.8" y2="784" stroke="#8a8a8a" stroke-width="0.8" stroke-dasharray="1 1.5"/>
<circle cx="387" cy="809.5" r="4.8" fill="url(#ball)"/>
<ellipse cx="386.5" cy="807.5" rx="2.5" ry="1.5" fill="#d8d8d8" opacity=".8"/>
<text x="387.5" y="783.5" font-size="10" text-anchor="middle" font-family="Liberation Sans" fill="#000">50</text>
<text x="362" y="829.5" font-size="10" text-anchor="middle" font-family="Liberation Sans" fill="#000">0</text>
<text x="411" y="829.5" font-size="10" text-anchor="middle" font-family="Liberation Sans" fill="#000" textLength="14" lengthAdjust="spacingAndGlyphs">100</text>
<rect x="372" y="826" width="31" height="13" fill="#000"/>
<text x="387.5" y="836.5" font-size="11" text-anchor="middle" font-family="Liberation Sans" fill="#fff">43°C</text>
</svg>
<div class="a" style="left:411px;top:836px;width:18px;height:17px;border:1px solid #8a8a8a;border-radius:3px;background:linear-gradient(#fdfdfd,#e0e0e0)"></div>
<div class="t" style="left:413px;top:839px;font-size:11px;color:#10183a">°F</div>
<div class="a" style="left:435px;top:767px;width:1161px;height:90px;border:1px solid #828790;background:#fff"></div>
<div class="t" style="left:439px;top:771px;font-size:11.5px;color:#111">1:\</div>
<div class="t" style="left:469px;top:771px;font-size:11.5px;color:#111">Rezervováno sy...</div>
<div class="t" style="left:569px;top:771px;font-size:11.5px;color:#111">NTFS</div>
<div class="t" style="left:618px;top:771px;font-size:11.5px;color:#111">99.996 MB</div>
<div class="a" style="left:698px;top:769px;width:896px;height:12px;border:1px solid #000;background:#c8fcc0"></div>
<div class="a" style="left:699px;top:770px;width:249px;height:10px;background:linear-gradient(#d8ecff 0,#a8d0fb 30%,#5a9ef0 60%,#3a86e8 100%)"></div>
<div class="t" style="left:699px;top:770px;width:894px;text-align:center;font-size:9.8px;color:#111">28% (28.648 MB)</div>
<div class="t" style="left:439px;top:788px;font-size:11.5px;color:#111">D:\</div>
<div class="t" style="left:569px;top:788px;font-size:11.5px;color:#111">NTFS</div>
<div class="t" style="left:618px;top:788px;font-size:11.5px;color:#111">585.84 GB</div>
<div class="a" style="left:698px;top:786px;width:896px;height:12px;border:1px solid #000;background:#c8fcc0"></div>
<div class="a" style="left:699px;top:787px;width:455px;height:10px;background:linear-gradient(#d8ecff 0,#a8d0fb 30%,#5a9ef0 60%,#3a86e8 100%)"></div>
<div class="t" style="left:699px;top:787px;width:894px;text-align:center;font-size:9.8px;color:#111">51% (303.13 GB)</div>
<div class="t" style="left:439px;top:805px;font-size:11.5px;color:#111">C:\</div>
<div class="t" style="left:569px;top:805px;font-size:11.5px;color:#111">NTFS</div>
<div class="t" style="left:618px;top:805px;font-size:11.5px;color:#111">112.697 GB</div>
<div class="a" style="left:698px;top:803px;width:896px;height:12px;border:1px solid #000;background:#c8fcc0"></div>
<div class="a" style="left:699px;top:804px;width:562px;height:10px;background:linear-gradient(#d8ecff 0,#a8d0fb 30%,#5a9ef0 60%,#3a86e8 100%)"></div>
<div class="t" style="left:699px;top:804px;width:894px;text-align:center;font-size:9.8px;color:#111">63% (71.015 GB)</div>

<div class="a" id="taskbar">
<div class="a" style="left:0;top:0;width:1600px;height:2px;background:linear-gradient(#3c4048,#22252a)"></div>
<div class="a" style="left:0;top:2px;width:1600px;height:38px;background:linear-gradient(100deg,#17120f 0,#1e1814 300px,#2a231f 420px,#221e1c 520px,#25282c 600px,#15171a 680px,#1e2226 760px,#0e1014 860px,#05070a 950px,#0f1317 1040px,#04060a 1130px,#07090d 1300px,#0a0c10 1600px)"></div>
<svg class="a" style="left:0;top:0" width="1600" height="40" viewBox="0 860 1600 40">
<defs>
<radialGradient id="orbglow" cx=".5" cy=".5" r=".5"><stop offset="0" stop-color="#40d8ff" stop-opacity=".9"/><stop offset="1" stop-color="#40d8ff" stop-opacity="0"/></radialGradient>
<radialGradient id="orb" cx=".5" cy=".35" r=".65"><stop offset="0" stop-color="#5fa0d0"/><stop offset=".6" stop-color="#1f5a8a"/><stop offset="1" stop-color="#0a2440"/></radialGradient>
<linearGradient id="btn" x1="0" y1="0" x2="1" y2="1"><stop offset="0" stop-color="#8a8684"/><stop offset=".45" stop-color="#4a4542"/><stop offset="1" stop-color="#2a2522"/></linearGradient>
<linearGradient id="btn2" x1="0" y1="0" x2="1" y2="1"><stop offset="0" stop-color="#b8b6b4"/><stop offset=".5" stop-color="#7a7674"/><stop offset="1" stop-color="#8a8684"/></linearGradient>
</defs>
<circle cx="27" cy="880" r="18.5" fill="url(#orb)" stroke="#4a5a70" stroke-width="1"/>
<ellipse cx="27" cy="873" rx="13" ry="8" fill="#fff" opacity=".15"/>
<ellipse cx="27" cy="893" rx="9" ry="5" fill="url(#orbglow)"/>
<path d="M18,871 Q22,868 26,871 L25,878 Q21,875 17,878 Z" fill="#f05a22"/>
<path d="M28,871 Q32,868 37,870 L36,877 Q32,875 27,878 Z" fill="#7ab832"/>
<path d="M17,880 Q21,877 25,880 L24,887 Q20,884 16,887 Z" fill="#1ea0e8"/>
<path d="M27,880 Q31,877 36,879 L35,886 Q31,884 26,887 Z" fill="#fcc020"/>
<ellipse cx="89" cy="879" rx="17" ry="6.5" transform="rotate(-42 89 879)" fill="none" stroke="#f4b400" stroke-width="2"/>
<path d="M79.5,880.5 H99 A10,10 0 1 0 96,888" fill="none" stroke="#2aa8ea" stroke-width="5"/>
<path d="M79.5,880.5 H99" fill="none" stroke="#58c8f8" stroke-width="2"/>
<path d="M76,892 Q74,885 82,876" fill="none" stroke="#f4b400" stroke-width="2"/>
<rect x="122.5" y="861.5" width="53" height="38" rx="3" fill="url(#btn)" stroke="#a6a29f" stroke-width="1"/>
<rect x="176" y="862" width="4" height="37" rx="1" fill="#2a2624" stroke="#6a6662" stroke-width="0.8"/>
<rect x="133" y="869" width="30" height="26" rx="2" fill="#f3df9a"/>
<rect x="133" y="869" width="14" height="4" fill="#f8e8b0"/>
<rect x="136" y="867" width="3" height="2" fill="#20c020"/><rect x="143" y="869" width="3" height="2" fill="#e02020"/><rect x="150" y="871" width="3" height="2" fill="#2080e0"/>
<path d="M137,895 L137,884 L159,884 L159,895 L153,895 L153,889 L143,889 L143,895 Z" fill="#8ac8f0" stroke="#5aa0d8" stroke-width="0.8"/>
<rect x="206" y="871" width="19" height="22" fill="#8ab8dc" stroke="#5a90c0" stroke-width="0.8"/>
<rect x="203" y="870" width="19" height="23" fill="#a4cdec" stroke="#5a90c0" stroke-width="0.8"/>
<rect x="199.5" y="869" width="19" height="24" fill="#b4d8f4" stroke="#6aa0cc" stroke-width="0.8"/>
<circle cx="209.5" cy="880.5" r="8" fill="#f47a20"/>
<circle cx="209.5" cy="880.5" r="8" fill="none" stroke="#ffb070" stroke-width="0.8" opacity=".6"/>
<polygon points="207,875.5 214.5,880.5 207,885.5" fill="#fff"/>
<rect x="246.5" y="861.5" width="57" height="38" rx="3" fill="url(#btn)" stroke="#8a8684" stroke-width="1"/>
<path d="M275,880 L262.88,873.00 A14,14 0 0 1 287.12,873.00 Z" fill="#dc3b2c"/><path d="M275,880 L287.12,873.00 A14,14 0 0 1 275.00,894.00 Z" fill="#f2c21a"/><path d="M275,880 L275.00,894.00 A14,14 0 0 1 262.88,873.00 Z" fill="#3ba34a"/>
<circle cx="275" cy="880" r="6.5" fill="#fff"/>
<circle cx="275" cy="880" r="5.2" fill="#3b82cc"/>
<rect x="308.5" y="861.5" width="57" height="38" rx="3" fill="url(#btn2)" stroke="#c8c6c4" stroke-width="1"/>
<rect x="322" y="867" width="29" height="26" fill="#0a120a" stroke="#d8d8d8" stroke-width="1.5"/>
<polyline points="325,885 328,882 331,870 334,884 337,873 341,876 344,885 348,879" fill="none" stroke="#22dd22" stroke-width="1"/>
<path d="M339,882 L345,880 L351,882 L351,888 Q345,895 339,888 Z" fill="#f0c020" stroke="#fff" stroke-width="0.8"/>
<path d="M345,880 L351,882 L351,887 L345,887 Z M339,887 L345,887 L345,894 Q341,892 339,888 Z" fill="#2a7ad8"/>
<text x="1357.5" y="882" font-size="11.5" text-anchor="middle" font-family="Liberation Sans" fill="#dcdcdc">CS</text>
<polygon points="1381,884 1385,879 1389,884" fill="#f0f0f0"/>
<rect x="1402" y="874" width="16" height="13" fill="#1e5aa0"/>
<rect x="1405" y="877" width="10" height="7" fill="#f0f0f0"/><rect x="1409" y="877" width="2" height="7" fill="#1e5aa0"/>
<line x1="1428" y1="873" x2="1428" y2="889" stroke="#e8e8e8" stroke-width="1.2"/>
<path d="M1429,873 L1437,873 L1441,877 L1429,880 Z" fill="#e8e8e8"/>
<circle cx="1437" cy="883.5" r="5" fill="#e02828" stroke="#fff" stroke-width="0.8"/>
<path d="M1435,881.5 L1439,885.5 M1439,881.5 L1435,885.5" stroke="#fff" stroke-width="1.2"/>
<rect x="1452" y="876" width="8" height="11" fill="none" stroke="#e8e8e8" stroke-width="1.2"/>
<rect x="1455" y="876" width="8" height="6" fill="#e8e8e8"/>
<line x1="1456" y1="873" x2="1456" y2="876" stroke="#e8e8e8"/><line x1="1461" y1="873" x2="1461" y2="876" stroke="#e8e8e8"/>
<rect x="1475" y="885" width="2" height="2" fill="#e8e8e8"/><rect x="1478" y="883" width="2" height="4" fill="#e8e8e8"/><rect x="1481" y="880" width="2" height="7" fill="#e8e8e8"/>
<rect x="1484" y="877" width="2" height="10" fill="#666"/><rect x="1487" y="875" width="2" height="12" fill="#555"/>
<path d="M1501,878 L1504,878 L1508,874 L1508,887 L1504,883 L1501,883 Z" fill="#e8e8e8"/>
<path d="M1511,878 Q1513,880.5 1511,883" fill="none" stroke="#aaa" stroke-width="1"/>
<text x="1553" y="877" font-size="11.3" text-anchor="middle" font-family="Liberation Sans" fill="#f4f4f4">8:45</text>
<text x="1552.5" y="894" font-size="11.3" text-anchor="middle" font-family="Liberation Sans" fill="#f4f4f4">25.5.2013</text>
<rect x="1587.5" y="861.5" width="11" height="38" fill="#1a1c20" stroke="#5a5e64" stroke-width="1"/>
</svg>
</div>
</body></html>
